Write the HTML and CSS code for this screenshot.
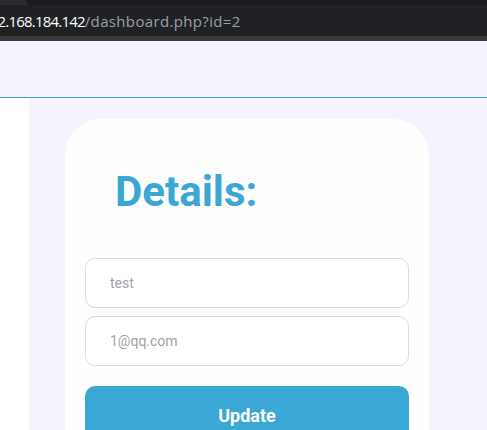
FILE: index.html
```html
<!DOCTYPE html>
<html lang="en">
<head>
<meta charset="utf-8">
<title>Dashboard</title>
<link rel="stylesheet" href="styles.css">
</head>
<body>
<div class="chrome">
  <div class="tabstrip"><div class="tab-gap"></div><div class="tab-rest"></div></div>
  <div class="urlbar"><span class="host">192.168.184.142</span><span class="path">/dashboard.php?id=2</span></div>
  <div class="chrome-edge"></div>
</div>
<header class="topbar"></header>
<div class="layout">
  <aside class="sidebar"></aside>
  <main class="content">
    <section class="card">
      <h2 class="card-title">Details:</h2>
      <form class="form">
        <input class="field" type="text" placeholder="test">
        <input class="field" type="email" placeholder="1@qq.com">
        <button class="btn" type="button">Update</button>
      </form>
    </section>
  </main>
</div>
</body>
</html>
```
FILE: styles.css
```css
* { box-sizing: border-box; }
html, body { margin: 0; padding: 0; }
body {
  background: #f5f3fe;
  font-family: Roboto, "Liberation Sans", sans-serif;
  height: 430px;
  overflow: hidden;
}
.chrome { height: 41px; background: #202124; display: flex; flex-direction: column; }
.tabstrip { height: 5px; display: flex; background: #2b2b2e; }
.tab-gap { width: 26px; }
.tab-rest { flex: 1; background: #1b1b1d; border-bottom-left-radius: 6px; }
.urlbar {
  height: 31px;
  background: #202124;
  display: flex;
  align-items: center;
  font-family: "Open Sans", "Liberation Sans", sans-serif;
  font-size: 15px;
  white-space: nowrap;
  overflow: hidden;
  padding-top: 1px;
}
.host { color: #ffffff; margin-left: -18px; letter-spacing: -0.8px; }
.path { color: #9aa0a6; letter-spacing: 0.35px; }
.chrome-edge { height: 5px; background: #3a3b3f; }
.topbar { height: 57px; background: #f5f3fe; border-bottom: 1px solid #4a9fcf; }
.layout { display: flex; height: 332px; }
.sidebar { width: 29px; background: #ffffff; }
.content { flex: 1; background: #f5f3fe; padding: 21px 0 0 36px; overflow: hidden; }
.card {
  width: 364px;
  height: 311px;
  background: #fefefe;
  border-radius: 36px 36px 0 0;
  padding: 49px 20px 0;
  overflow: hidden;
}
.card-title {
  margin: 0 0 42px 30px;
  font-size: 42px;
  line-height: 48px;
  font-weight: 700;
  color: #3ba7d4;
}
.form { display: flex; flex-direction: column; gap: 8px; }
.field {
  height: 50px;
  width: 100%;
  flex: none;
  border: 1px solid #dcdae6;
  border-radius: 10px;
  background: #ffffff;
  padding: 0 0 0 24px;
  font-family: Roboto, "Liberation Sans", sans-serif;
  font-size: 14px;
  color: #555;
  outline: none;
}
.field::placeholder { color: #a2a2a8; }
.btn {
  margin-top: 12px;
  height: 58px;
  width: 100%;
  flex: none;
  border: none;
  border-radius: 10px;
  background: #3ba7d4;
  color: #ffffff;
  font-family: Roboto, "Liberation Sans", sans-serif;
  font-size: 18px;
  font-weight: 700;
}
```
